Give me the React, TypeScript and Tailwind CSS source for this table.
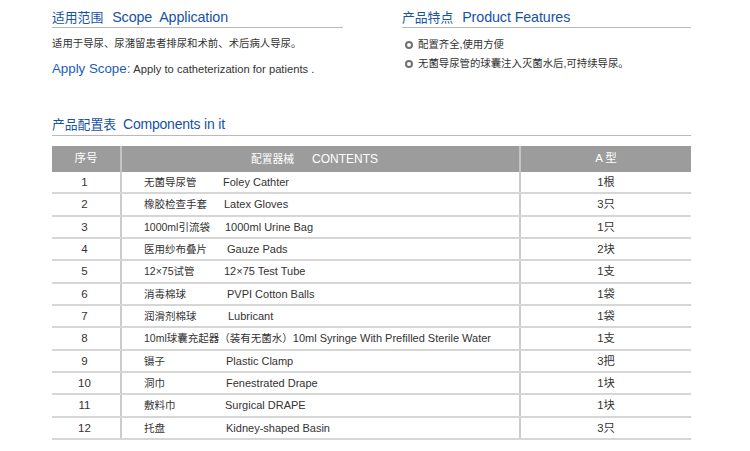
const rows: { no: string; cn: string; en: string; enX: number; qty: string }[] = [
  { no: "1", cn: "无菌导尿管", en: "Foley Cathter", enX: 79, qty: "1根" },
  { no: "2", cn: "橡胶检查手套", en: "Latex Gloves", enX: 80, qty: "3只" },
  { no: "3", cn: "1000ml引流袋", en: "1000ml Urine Bag", enX: 81, qty: "1只" },
  { no: "4", cn: "医用纱布叠片", en: "Gauze Pads", enX: 83, qty: "2块" },
  { no: "5", cn: "12×75试管", en: "12×75 Test Tube", enX: 80, qty: "1支" },
  { no: "6", cn: "消毒棉球", en: "PVPI Cotton Balls", enX: 83, qty: "1袋" },
  { no: "7", cn: "润滑剂棉球", en: "Lubricant", enX: 84, qty: "1袋" },
  { no: "8", cn: "10ml球囊充起器（装有无菌水）", en: "10ml Syringe With Prefilled Sterile Water", enX: 0, qty: "1支" },
  { no: "9", cn: "镊子", en: "Plastic Clamp", enX: 82, qty: "3把" },
  { no: "10", cn: "洞巾", en: "Fenestrated Drape", enX: 82, qty: "1块" },
  { no: "11", cn: "敷料巾", en: "Surgical DRAPE", enX: 81, qty: "1块" },
  { no: "12", cn: "托盘", en: "Kidney-shaped Basin", enX: 82, qty: "3只" },
];

const font = { fontFamily: '"Liberation Sans", Arial, "Noto Sans CJK SC", sans-serif' };

function Heading({ cn, en }: { cn: string; en: string }) {
  return (
    <div className="h-[21px] whitespace-pre border-b border-[#b9b9b9] leading-[20px] text-[#1652a6]">
      <span className="mr-[9px] text-[12.8px]">{cn}</span>
      <span className="text-[14.3px] tracking-[-0.1px]">{en}</span>
    </div>
  );
}

function Bullet({ children }: { children: React.ReactNode }) {
  return (
    <div className="flex items-center leading-[16px] text-[10.4px] text-[#333]">
      <span className="ml-[3px] mr-[5px] h-[8px] w-[8px] rounded-full border-2 border-[#707070]" />
      {children}
    </div>
  );
}

export default function App() {
  return (
    <div className="h-[451px] w-[750px] bg-white pl-[52px] pt-[7px]" style={font}>
      <div className="flex w-[639px] gap-[59px]">
        <div className="w-[291px]">
          <Heading cn="适用范围" en="Scope  Application" />
          <p className="mt-[8px] text-[10.4px] leading-[16px] text-[#333]">
            适用于导尿、尿潴留患者排尿和术前、术后病人导尿。
          </p>
          <p className="mt-[7px] leading-[18px] text-[#333]">
            <span className="text-[13.3px] text-[#1e5cb3]">Apply Scope:</span>
            <span className="ml-[3px] text-[11.2px]">Apply to catheterization for patients .</span>
          </p>
        </div>
        <div className="w-[289px]">
          <Heading cn="产品特点" en="Product Features" />
          <div className="mt-[9px] flex flex-col gap-[3px]">
            <Bullet>配置齐全,使用方便</Bullet>
            <Bullet>无菌导尿管的球囊注入灭菌水后,可持续导尿。</Bullet>
          </div>
        </div>
      </div>

      <div className="mt-[36px] w-[639px]">
        <div className="h-[22px] border-b border-[#b9b9b9] leading-[20px] text-[#1652a6]">
          <span className="mr-[7px] text-[12.8px]">产品配置表</span>
          <span className="text-[14px] tracking-[-0.2px]">Components in it</span>
        </div>

        <div className="mt-[10px] text-[11px] text-[#333]">
          <div className="grid h-[26px] grid-cols-[70px_399px_170px] bg-[#9c9c9c] text-white">
            <div className="flex items-center justify-center border-r-2 border-[#c4c4c4] text-[11.5px]">序号</div>
            <div className="flex items-center justify-center border-r-2 border-[#c4c4c4] pr-[12px]">
              <span className="text-[10.8px]">配置器械</span>
              <span className="ml-[18px] text-[12px]">CONTENTS</span>
            </div>
            <div className="flex items-center justify-center text-[11.5px]">A 型</div>
          </div>
          {rows.map((r) => (
            <div
              key={r.no}
              className="grid h-[22.33px] grid-cols-[70px_399px_170px] border-b-2 border-[#d6d6d6] leading-[20px]"
            >
              <div className="flex items-center justify-center border-r-2 border-[#cccccc] pr-[3px] text-[11.5px]">
                {r.no}
              </div>
              <div className="flex items-center border-r-2 border-[#cccccc] pl-[22px]">
                {r.enX ? (
                  <>
                    <span className="shrink-0 text-[10.5px]" style={{ width: r.enX }}>
                      {r.cn}
                    </span>
                    <span>{r.en}</span>
                  </>
                ) : (
                  <>
                    <span className="text-[10.5px]">{r.cn}</span>
                    <span>{r.en}</span>
                  </>
                )}
              </div>
              <div className="flex items-center justify-center text-[11.3px]">{r.qty}</div>
            </div>
          ))}
        </div>
      </div>
    </div>
  );
}
